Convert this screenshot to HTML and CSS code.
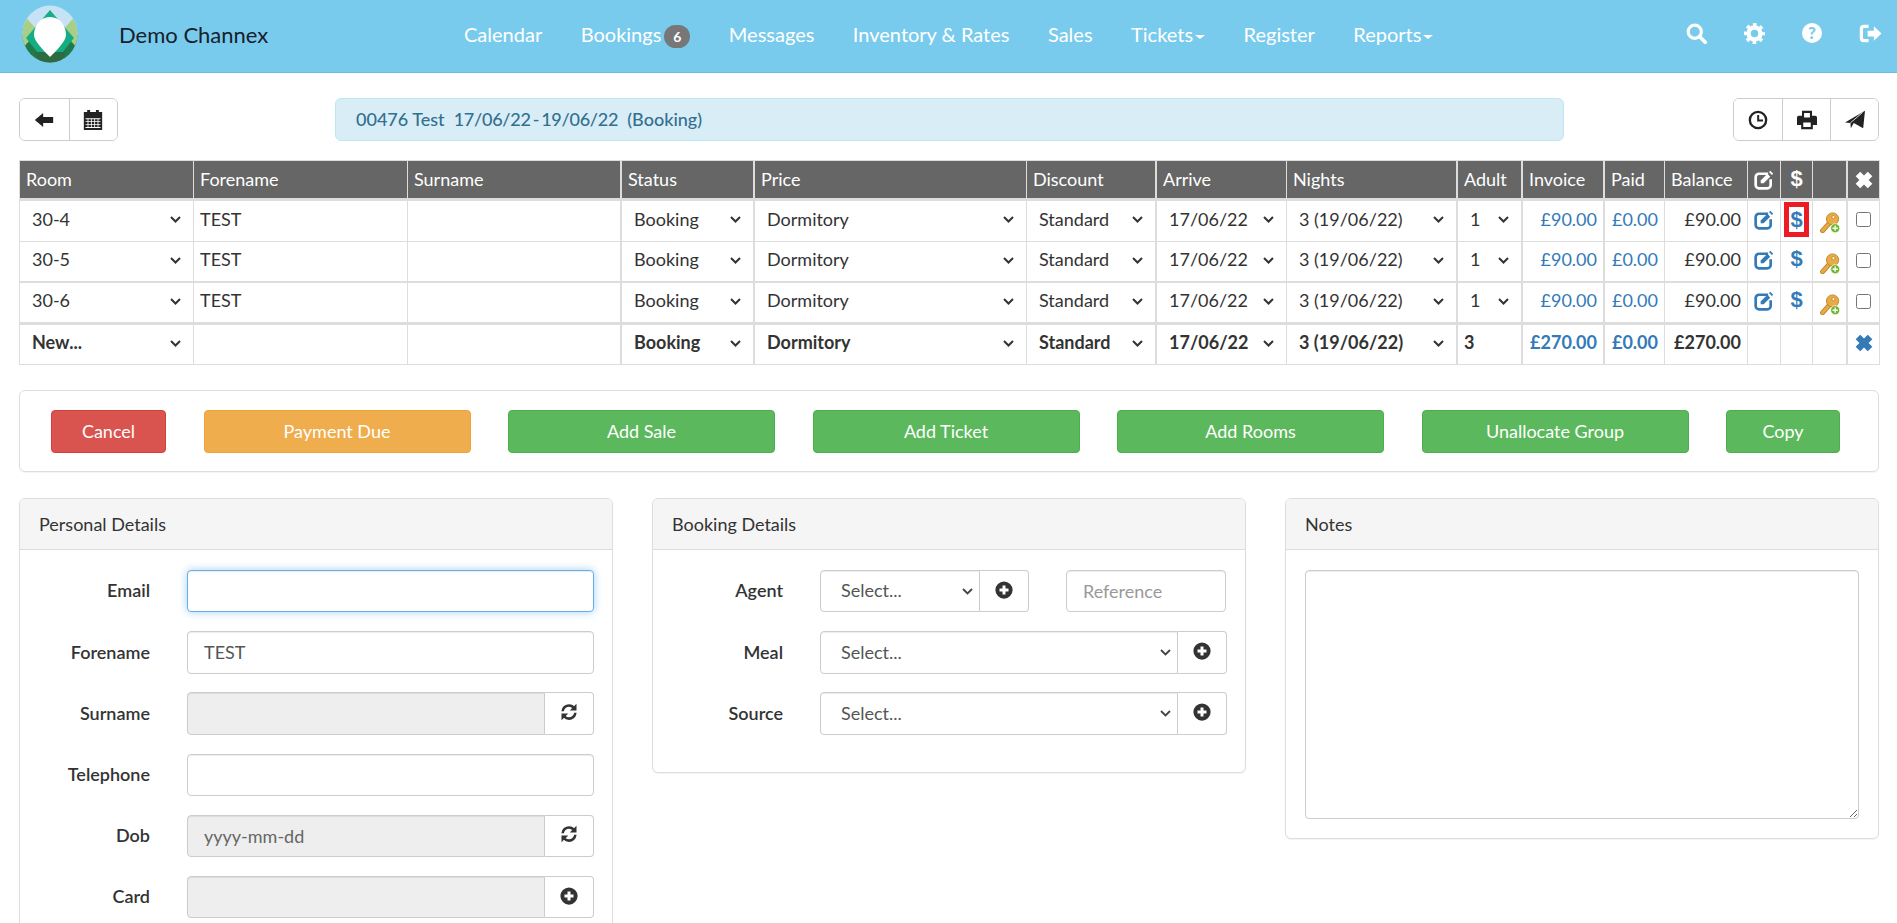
FILE: index.html
```html
<!DOCTYPE html>
<html lang="en">
<head>
<meta charset="utf-8">
<title>Demo Channex</title>
<link rel="stylesheet" href="styles.css">
</head>
<body>
<svg class="defs" aria-hidden="true">
  <symbol id="i-back" viewBox="0 0 24 24"><path d="M1 12 11 3.500V8.500h12v7H11V20.500Z"/></symbol>
  <symbol id="i-cal" viewBox="0 0 24 24"><path d="M5 0h3.500v2.500h7V0H19v2.500h4V24H1V2.500h4Z"/><path fill="#fff" d="M3 10h18v1H3Zm0 3.500h18v1H3Zm0 3.500h18v1H3Zm0 3.500h18v1H3ZM5.500 10h1v11h-1Zm4 0h1v11h-1Zm4 0h1v11h-1Zm4 0h1v11h-1Z"/></symbol>
  <symbol id="i-search" viewBox="0 0 24 24"><circle cx="10" cy="10" r="7.500" fill="none" stroke="currentColor" stroke-width="3.600"/><path d="M15.500 15.500 22 22" stroke="currentColor" stroke-width="4.200" stroke-linecap="round"/></symbol>
  <symbol id="i-cog" viewBox="0 0 24 24"><circle cx="12" cy="12" r="6.800" fill="none" stroke="currentColor" stroke-width="5"/><circle cx="12" cy="12" r="10" fill="none" stroke="currentColor" stroke-width="4" stroke-dasharray="4 3.854" stroke-dashoffset="2"/></symbol>
  <symbol id="i-out" viewBox="0 0 24 24"><path d="M10 4.500H5A2.500 2.500 0 0 0 2.500 7v10A2.500 2.500 0 0 0 5 19.500h5" fill="none" stroke="currentColor" stroke-width="3.400"/><path d="M9 9h6.500V4.500L23.500 12l-8 7.500V15H9Z"/></symbol>
  <symbol id="i-time" viewBox="0 0 24 24"><circle cx="12" cy="12" r="9.800" fill="none" stroke="currentColor" stroke-width="2.800"/><path d="M11 6h2.400v5.400H18v2.400h-7Z"/></symbol>
  <symbol id="i-print" viewBox="0 0 24 24"><path fill-rule="evenodd" d="M6 1h12v6h4a2 2 0 0 1 2 2v9h-5v5H5v-5H0V9a2 2 0 0 1 2-2h4Zm2.500 2.500V9h7V3.500ZM7.500 15v5.500h9V15Z"/></symbol>
  <symbol id="i-send" viewBox="0 0 24 24"><path d="M24 1 21.800 22 10.500 15.500 7 22 6.500 15.500 0 15Z"/><path d="M6.500 15.500 21 3" fill="none" stroke="#fff" stroke-width="1"/></symbol>
  <symbol id="i-edit" viewBox="0 0 24 24"><path d="M17 4.500H6A4 4 0 0 0 2 8.500v9.500a4 4 0 0 0 4 4h10a4 4 0 0 0 4-4V11" fill="none" stroke="currentColor" stroke-width="3.200"/><path d="m8 12.500 8-8 3.500 3.500-8 8H8Z"/><path d="m18 2.500 1.500-1.500 3.500 3.500-1.500 1.500Z"/></symbol>
  <symbol id="i-x" viewBox="0 0 24 24"><path d="M7.500 2 12 6.500 16.500 2 22 7.500 17.500 12 22 16.500 16.500 22 12 17.500 7.500 22 2 16.500 6.500 12 2 7.500Z"/></symbol>
  <symbol id="i-refresh" viewBox="0 0 24 24"><path d="M3.500 11C3.900 6.500 7.800 3.200 12 3.200c2.400 0 4.600 1 6 2.700" fill="none" stroke="currentColor" stroke-width="3.400"/><path d="M22 1V10H13Z"/><path d="M20.500 13c-.4 4.500-4.300 7.800-8.500 7.800-2.400 0-4.600-1-6-2.700" fill="none" stroke="currentColor" stroke-width="3.400"/><path d="M2 23V14H11Z"/></symbol>
  <symbol id="i-plus" viewBox="0 0 24 24"><path fill-rule="evenodd" d="M12 .5a11.500 11.500 0 1 1 0 23 11.500 11.500 0 0 1 0-23ZM10 6v4H6v4h4v4h4v-4h4v-4h-4V6Z"/></symbol>
  <symbol id="i-key" viewBox="0 0 24 24">
    <path d="M4 21.500 12 12.500" stroke="#bd8229" stroke-width="5.500" stroke-linecap="round" fill="none"/>
    <path d="M4 21.500 12 12.500" stroke="#e9ab45" stroke-width="3.500" stroke-linecap="round" fill="none"/>
    <circle cx="15.500" cy="8" r="7" fill="#e9ab45" stroke="#bd8229" stroke-width="1"/>
    <circle cx="16.500" cy="5.800" r="1.800" fill="#fff6dc" stroke="#b47a1e" stroke-width=".8"/>
    <circle cx="18.500" cy="18.500" r="5.200" fill="#6fb52c" stroke="#fff" stroke-width=".8"/>
    <path d="M17.700 15.500h1.600v2.200h2.200v1.600h-2.200v2.200h-1.600v-2.200h-2.200v-1.600h2.200Z" fill="#fff"/>
  </symbol>
</svg>

<header class="navbar">
  <svg class="logo" viewBox="0 0 56 58" aria-label="Logo">
    <defs><clipPath id="logo-clip"><ellipse cx="28" cy="29" rx="27.500" ry="28.500"/></clipPath></defs>
    <g clip-path="url(#logo-clip)">
      <rect width="56" height="58" fill="#c5e3f4"/>
      <rect y="30" width="56" height="28" fill="#1f7a4c"/>
      <path d="M0 8 16 26 0 44Z" fill="#a9cf86"/>
      <path d="M56 8 40 26 56 44Z" fill="#a9cf86"/>
      <path d="M45 5 57 5 57 15Z" fill="#f3e418"/>
      <path d="M28 5 52 33 40 48H16L4 33Z" fill="#16ad84"/>
      <path d="M12 47 44 47 38 58H18Z" fill="#2e6a42"/>
      <path d="M28 12C39 12 44 22 44 30 44 36 34 46 28 52 22 46 12 36 12 30 12 22 17 12 28 12Z" fill="#fff"/>
    </g>
  </svg>
  <a class="brand">Demo Channex</a>
  <nav class="nav">
    <a>Calendar</a>
    <a>Bookings<span class="badge">6</span></a>
    <a>Messages</a>
    <a>Inventory &amp; Rates</a>
    <a>Sales</a>
    <a>Tickets<span class="caret"></span></a>
    <a>Register</a>
    <a>Reports<span class="caret"></span></a>
  </nav>
  <div class="nav-icons">
    <svg class="nav-icon"><use href="#i-search"/></svg>
    <svg class="nav-icon"><use href="#i-cog"/></svg>
    <span class="help">?</span>
    <svg class="nav-icon nav-icon-wide"><use href="#i-out"/></svg>
  </div>
</header>

<main class="page">
  <div class="toolbar">
    <div class="btn-group">
      <button class="tool tool-left"><svg class="tool-icon"><use href="#i-back"/></svg></button>
      <button class="tool tool-left"><svg class="tool-icon"><use href="#i-cal"/></svg></button>
    </div>
    <div class="alert">00476 Test&nbsp; <span class="dates">17/06/22&thinsp;-&thinsp;19/06/22</span>&nbsp; (Booking)</div>
    <div class="btn-group">
      <button class="tool"><svg class="tool-icon"><use href="#i-time"/></svg></button>
      <button class="tool"><svg class="tool-icon"><use href="#i-print"/></svg></button>
      <button class="tool"><svg class="tool-icon"><use href="#i-send"/></svg></button>
    </div>
  </div>

  <table class="rooms">
    <colgroup>
      <col class="w174"><col class="w214"><col class="w213"><col class="w133"><col class="w273"><col class="w129"><col class="w131"><col class="w170"><col class="w65"><col class="w82"><col class="w61"><col class="w83"><col class="w33"><col class="w32"><col class="w34"><col class="w33">
    </colgroup>
    <thead>
      <tr>
        <th>Room</th><th>Forename</th><th>Surname</th><th>Status</th><th>Price</th><th>Discount</th><th>Arrive</th><th>Nights</th><th>Adult</th><th>Invoice</th><th>Paid</th><th>Balance</th>
        <th class="ctr"><svg class="cell-icon"><use href="#i-edit"/></svg></th>
        <th class="ctr"><span class="usd">$</span></th>
        <th></th>
        <th class="ctr"><svg class="cell-icon"><use href="#i-x"/></svg></th>
      </tr>
    </thead>
    <tbody>
      <tr class="r1">
        <td class="sel"><select class="cell-select"><option>30-4</option></select></td><td>TEST</td><td></td>
        <td class="sel"><select class="cell-select"><option>Booking</option></select></td>
        <td class="sel"><select class="cell-select"><option>Dormitory</option></select></td>
        <td class="sel"><select class="cell-select"><option>Standard</option></select></td>
        <td class="sel"><select class="cell-select"><option>17/06/22</option></select></td>
        <td class="sel"><select class="cell-select"><option>3 (19/06/22)</option></select></td>
        <td class="sel"><select class="cell-select"><option>1</option></select></td>
        <td class="num link">£90.00</td><td class="num link">£0.00</td><td class="num">£90.00</td>
        <td class="ctr link"><svg class="cell-icon"><use href="#i-edit"/></svg></td>
        <td class="ctr link"><span class="usd usd-marked">$</span></td>
        <td class="ctr"><svg class="key-icon"><use href="#i-key"/></svg></td>
        <td class="ctr"><input class="check" type="checkbox"></td>
      </tr>
      <tr class="r2">
        <td class="sel"><select class="cell-select"><option>30-5</option></select></td><td>TEST</td><td></td>
        <td class="sel"><select class="cell-select"><option>Booking</option></select></td>
        <td class="sel"><select class="cell-select"><option>Dormitory</option></select></td>
        <td class="sel"><select class="cell-select"><option>Standard</option></select></td>
        <td class="sel"><select class="cell-select"><option>17/06/22</option></select></td>
        <td class="sel"><select class="cell-select"><option>3 (19/06/22)</option></select></td>
        <td class="sel"><select class="cell-select"><option>1</option></select></td>
        <td class="num link">£90.00</td><td class="num link">£0.00</td><td class="num">£90.00</td>
        <td class="ctr link"><svg class="cell-icon"><use href="#i-edit"/></svg></td>
        <td class="ctr link"><span class="usd">$</span></td>
        <td class="ctr"><svg class="key-icon"><use href="#i-key"/></svg></td>
        <td class="ctr"><input class="check" type="checkbox"></td>
      </tr>
      <tr class="r3">
        <td class="sel"><select class="cell-select"><option>30-6</option></select></td><td>TEST</td><td></td>
        <td class="sel"><select class="cell-select"><option>Booking</option></select></td>
        <td class="sel"><select class="cell-select"><option>Dormitory</option></select></td>
        <td class="sel"><select class="cell-select"><option>Standard</option></select></td>
        <td class="sel"><select class="cell-select"><option>17/06/22</option></select></td>
        <td class="sel"><select class="cell-select"><option>3 (19/06/22)</option></select></td>
        <td class="sel"><select class="cell-select"><option>1</option></select></td>
        <td class="num link">£90.00</td><td class="num link">£0.00</td><td class="num">£90.00</td>
        <td class="ctr link"><svg class="cell-icon"><use href="#i-edit"/></svg></td>
        <td class="ctr link"><span class="usd">$</span></td>
        <td class="ctr"><svg class="key-icon"><use href="#i-key"/></svg></td>
        <td class="ctr"><input class="check" type="checkbox"></td>
      </tr>
      <tr class="r4">
        <td class="sel"><select class="cell-select"><option>New...</option></select></td><td></td><td></td>
        <td class="sel"><select class="cell-select"><option>Booking</option></select></td>
        <td class="sel"><select class="cell-select"><option>Dormitory</option></select></td>
        <td class="sel"><select class="cell-select"><option>Standard</option></select></td>
        <td class="sel"><select class="cell-select"><option>17/06/22</option></select></td>
        <td class="sel"><select class="cell-select"><option>3 (19/06/22)</option></select></td>
        <td>3</td>
        <td class="num link">£270.00</td><td class="num link">£0.00</td><td class="num">£270.00</td>
        <td></td><td></td><td></td>
        <td class="ctr link"><svg class="cell-icon"><use href="#i-x"/></svg></td>
      </tr>
    </tbody>
  </table>

  <div class="actions">
    <button class="btn btn-red a115">Cancel</button>
    <button class="btn btn-amber a267">Payment Due</button>
    <button class="btn btn-green a267">Add Sale</button>
    <button class="btn btn-green a267">Add Ticket</button>
    <button class="btn btn-green a267">Add Rooms</button>
    <button class="btn btn-green a267">Unallocate Group</button>
    <button class="btn btn-green a114">Copy</button>
  </div>

  <div class="columns">
    <section class="panel">
      <h2 class="panel-head">Personal Details</h2>
      <div class="panel-body">
        <div class="field"><label class="label">Email</label><input class="control control-focus" type="text"></div>
        <div class="field"><label class="label">Forename</label><input class="control" type="text" value="TEST"></div>
        <div class="field"><label class="label">Surname</label><div class="group"><input class="control" type="text" disabled><span class="addon"><svg class="add-icon"><use href="#i-refresh"/></svg></span></div></div>
        <div class="field"><label class="label">Telephone</label><input class="control" type="text"></div>
        <div class="field"><label class="label">Dob</label><div class="group"><input class="control" type="text" value="yyyy-mm-dd" disabled><span class="addon"><svg class="add-icon"><use href="#i-refresh"/></svg></span></div></div>
        <div class="field"><label class="label">Card</label><div class="group"><input class="control" type="text" disabled><span class="addon"><svg class="add-icon"><use href="#i-plus"/></svg></span></div></div>
      </div>
    </section>

    <section class="panel panel-top">
      <h2 class="panel-head">Booking Details</h2>
      <div class="panel-body">
        <div class="field">
          <label class="label">Agent</label>
          <div class="agent">
            <div class="group"><select class="control control-select"><option>Select...</option></select><span class="addon"><svg class="add-icon"><use href="#i-plus"/></svg></span></div>
            <input class="control" type="text" placeholder="Reference">
          </div>
        </div>
        <div class="field"><label class="label">Meal</label><div class="group"><select class="control control-select"><option>Select...</option></select><span class="addon"><svg class="add-icon"><use href="#i-plus"/></svg></span></div></div>
        <div class="field"><label class="label">Source</label><div class="group"><select class="control control-select"><option>Select...</option></select><span class="addon"><svg class="add-icon"><use href="#i-plus"/></svg></span></div></div>
      </div>
    </section>

    <section class="panel panel-top">
      <h2 class="panel-head">Notes</h2>
      <div class="panel-body notes-body"><textarea class="notes"></textarea></div>
    </section>
  </div>
</main>
</body>
</html>
```

FILE: styles.css
```css
* { box-sizing: border-box; }
html, body { height: 100%; overflow: hidden; }
body { margin: 0; background: #fff; color: #333; font-family: Lato, "Liberation Sans", sans-serif; font-size: 18px; line-height: 1.43; }
.defs { position: absolute; width: 0; height: 0; }
svg { fill: currentColor; }

.navbar { display: flex; align-items: center; height: 73px; padding: 0 0 0 22px; background: #79cbed; border-bottom: 1px solid #67c0e8; }
.logo { width: 56px; height: 58px; flex: none; margin-top: -5px; }
.brand { margin-left: 41px; width: 150px; white-space: nowrap; font-size: 22px; color: #16202a; margin-top: -3px; }
.nav { display: flex; align-items: center; gap: 38.500px; margin-left: 195px; margin-top: -3px; color: #fff; font-size: 20px; }
.nav a { white-space: nowrap; }
.badge { display: inline-block; min-width: 26px; height: 23px; margin-left: 3px; padding: 4px 6px; border-radius: 12px; background: #777; color: #fff; font-size: 14px; font-weight: 700; line-height: 15px; text-align: center; vertical-align: 0; }
.caret { display: inline-block; margin-left: 2px; vertical-align: middle; border-top: 4px solid #fff; border-left: 5px solid transparent; border-right: 5px solid transparent; }
.nav-icons { display: flex; align-items: center; margin-left: auto; gap: 37px; padding-right: 15px; color: #fff; margin-top: -6px; }
.nav-icon { width: 21px; height: 21px; }
.nav-icon-wide { width: 23px; height: 23px; }
.help { display: block; width: 20px; height: 20px; border-radius: 50%; background: #fff; color: #79cbed; font-size: 17px; font-weight: 900; line-height: 20px; text-align: center; }

.page { padding: 25px 18px 0 19px; }
.toolbar { display: flex; align-items: stretch; height: 43px; }
.btn-group { display: flex; border: 1px solid #ccc; border-radius: 6px; overflow: hidden; background: #fff; }
.tool { width: 48px; padding: 0; border: 0; border-left: 1px solid #ccc; background: #fff; color: #222; display: flex; align-items: center; justify-content: center; }
.tool:first-child { border-left: 0; }
.tool-left { width: 48.500px; }
.tool-icon { width: 20px; height: 20px; }
.alert { width: 1229px; margin: 0 auto 0 217px; padding: 0 20px; background: #d9edf7; border: 1px solid #bce8f1; border-radius: 6px; color: #31708f; font-weight: 500; line-height: 41px; white-space: nowrap; }
.dates { letter-spacing: -.25px; }

.rooms { table-layout: fixed; width: 100%; margin-top: 19px; border-collapse: separate; border-spacing: 0; border-right: 1px solid #ddd; }
.w174 { width: 174px; } .w214 { width: 214px; } .w213 { width: 213px; } .w133 { width: 133px; } .w273 { width: 273px; } .w129 { width: 129px; } .w131 { width: 131px; } .w170 { width: 170px; } .w65 { width: 65px; } .w82 { width: 82px; } .w61 { width: 61px; } .w83 { width: 83px; } .w33 { width: 33px; } .w32 { width: 32px; } .w34 { width: 34px; }
.rooms th, .rooms td { padding: 0 6px; border-left: 1px solid #ddd; white-space: nowrap; overflow: hidden; }
.rooms td { padding-bottom: 3px; }
.rooms th:nth-child(4), .rooms th:nth-child(5), .rooms th:nth-child(7), .rooms th:nth-child(9), .rooms th:nth-child(10), .rooms th:nth-child(11), .rooms th:nth-child(16),
.rooms td:nth-child(4), .rooms td:nth-child(5), .rooms td:nth-child(7), .rooms td:nth-child(9), .rooms td:nth-child(10), .rooms td:nth-child(11), .rooms td:nth-child(16) { border-left-width: 2px; }
.rooms th { height: 41px; background: #666; color: #fff; font-weight: 400; text-align: left; border-top: 1px solid #ddd; border-bottom: 3px solid #ddd; }
.r1 td { height: 41px; border-bottom: 1px solid #ddd; }
.r2 td { height: 41px; border-bottom: 2px solid #ddd; }
.r3 td { height: 42px; border-bottom: 3px solid #ddd; }
.r4 td { height: 40px; border-bottom: 1px solid #ddd; font-weight: 700; }
.rooms .sel { padding-right: 9px; }
.rooms .ctr { padding-left: 0; padding-right: 0; text-align: center; }
.rooms .num { text-align: right; }
.link { color: #337ab7; }
.cell-select { display: block; width: 100%; height: 32px; padding: 0 0 0 6px; border: 0; border-radius: 0; color: inherit; font: inherit; appearance: none; background: #fff url("data:image/svg+xml,%3Csvg xmlns='http://www.w3.org/2000/svg' width='11' height='7'%3E%3Cpath d='M1 1l4.500 4.500L10 1' fill='none' stroke='%23333' stroke-width='2'/%3E%3C/svg%3E") no-repeat right 3px center; }
.cell-icon { display: block; width: 20px; height: 20px; margin: 0 auto; }
.key-icon { display: block; width: 21px; height: 21px; margin: 6px auto 0; }
.usd { font-family: "Liberation Sans", sans-serif; font-size: 22px; font-weight: 700; line-height: 1; }
.usd-marked { display: inline-block; width: 25px; height: 35px; border: 5px solid #ed1c24; line-height: 25px; }
.check { display: block; width: 15px; height: 15px; margin: 0 auto; }

.actions { display: flex; justify-content: space-between; height: 82px; margin-top: 25px; padding: 19px 38px 18px 31px; border: 1px solid #ddd; border-radius: 6px; box-shadow: 0 1px 1px rgba(0,0,0,.05); }
.btn { flex: none; height: 43px; padding: 0; border: 1px solid; border-radius: 4px; color: #fff; font: inherit; }
.a115 { width: 115px; } .a114 { width: 114px; } .a267 { width: 267px; }
.btn-red { background: #d9534f; border-color: #d43f3a; }
.btn-amber { background: #f0ad4e; border-color: #eea236; }
.btn-green { background: #5cb85c; border-color: #4cae4c; }

.columns { display: grid; grid-template-columns: repeat(3, 594px); gap: 39px; margin-top: 26px; align-items: start; }
.panel { border: 1px solid #ddd; border-radius: 6px; box-shadow: 0 1px 1px rgba(0,0,0,.05); background: #fff; }
.panel-head { margin: 0; height: 51px; padding: 0 19px; background: #f5f5f5; border-bottom: 1px solid #ddd; border-radius: 5px 5px 0 0; font-size: 18px; font-weight: 400; line-height: 50px; }
.panel-body { padding: 20px 18px 18px 19px; }
.field { display: grid; grid-template-columns: 111px 1fr; column-gap: 37px; align-items: center; height: 42.400px; margin-bottom: 18.800px; }
.label { font-weight: 600; text-align: right; }
.control { display: block; width: 100%; height: 100%; padding: 0 16px; border: 1px solid #ccc; border-radius: 4px; background: #fff; color: #555; font: inherit; box-shadow: inset 0 1px 1px rgba(0,0,0,.075); }
.control:disabled { background: #eee; opacity: 1; color: #666; }
.control::placeholder { color: #999; opacity: 1; }
.control-focus { border-color: #66afe9; box-shadow: inset 0 1px 1px rgba(0,0,0,.075), 0 0 8px rgba(102,175,233,.6); }
.control-select { padding-left: 20px; appearance: none; background: #fff url("data:image/svg+xml,%3Csvg xmlns='http://www.w3.org/2000/svg' width='11' height='7'%3E%3Cpath d='M1 1l4.500 4.500L10 1' fill='none' stroke='%23444' stroke-width='1.800'/%3E%3C/svg%3E") no-repeat right 6px center; }
.group { display: flex; height: 100%; min-width: 0; }
.group .control { flex: 1; min-width: 0; border-radius: 4px 0 0 4px; }
.addon { flex: none; width: 49px; display: flex; align-items: center; justify-content: center; border: 1px solid #ccc; border-left: 0; border-radius: 0 4px 4px 0; background: #fff; color: #333; }
.add-icon { width: 18px; height: 18px; margin-top: -3px; }
.agent { display: grid; grid-template-columns: 209px 160px; column-gap: 37px; height: 100%; }
.notes-body { padding: 20px 19px; height: 288px; }
.notes { display: block; width: 100%; height: 249px; border: 1px solid #ccc; border-radius: 4px; box-shadow: inset 0 1px 1px rgba(0,0,0,.075); font: inherit; }
```
